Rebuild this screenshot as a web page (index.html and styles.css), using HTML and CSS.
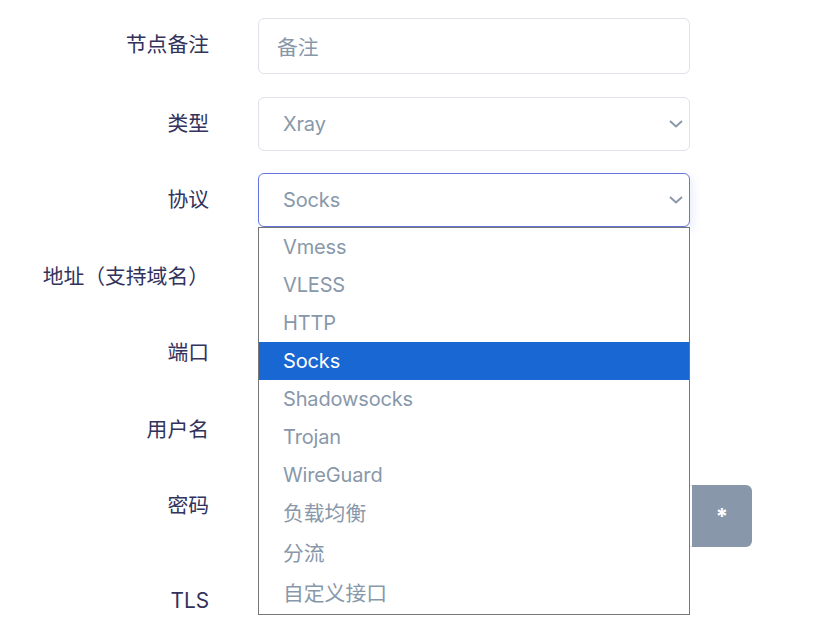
FILE: index.html
```html
<!DOCTYPE html>
<html lang="zh-CN">
<head>
<meta charset="utf-8">
<title>节点设置</title>
<link rel="stylesheet" href="styles.css">
</head>
<body>
<form class="form">
  <div class="row">
    <label class="label">节点备注</label>
    <div class="control input input-tall"><span class="placeholder">备注</span></div>
  </div>
  <div class="row">
    <label class="label">类型</label>
    <div class="control select">
      <span class="value">Xray</span>
      <svg class="chevron" width="14" height="8" viewBox="0 0 14 8"><path d="M1 1l6 5.5L13 1" fill="none" stroke="#8898aa" stroke-width="2"/></svg>
    </div>
  </div>
  <div class="row">
    <label class="label">协议</label>
    <div class="select-wrap">
      <div class="control select focused">
        <span class="value">Socks</span>
        <svg class="chevron" width="14" height="8" viewBox="0 0 14 8"><path d="M1 1l6 5.5L13 1" fill="none" stroke="#8898aa" stroke-width="2"/></svg>
      </div>
      <ul class="dropdown">
        <li class="opt">Vmess</li>
        <li class="opt">VLESS</li>
        <li class="opt">HTTP</li>
        <li class="opt selected">Socks</li>
        <li class="opt">Shadowsocks</li>
        <li class="opt">Trojan</li>
        <li class="opt">WireGuard</li>
        <li class="opt cjk">负载均衡</li>
        <li class="opt cjk">分流</li>
        <li class="opt cjk">自定义接口</li>
      </ul>
    </div>
  </div>
  <div class="row">
    <label class="label">地址（支持域名）</label>
    <div class="control input"></div>
  </div>
  <div class="row">
    <label class="label">端口</label>
    <div class="control input"></div>
  </div>
  <div class="row">
    <label class="label">用户名</label>
    <div class="control input"></div>
  </div>
  <div class="row">
    <label class="label">密码</label>
    <div class="group">
      <div class="input group-input"></div>
      <button type="button" class="btn-gen">*</button>
    </div>
  </div>
  <div class="row row-tls">
    <label class="label">TLS</label>
    <div class="toggle"><span class="knob"></span></div>
  </div>
</form>
</body>
</html>
```

FILE: styles.css
```css
* { box-sizing: border-box; }
html, body { margin: 0; padding: 0; background: #fff; }
body {
  width: 815px;
  height: 627px;
  overflow: hidden;
  font-family: Inter, "Noto Sans CJK SC", sans-serif;
  font-size: 20.8px;
  color: #32325d;
}
.form {
  display: flex;
  flex-direction: column;
  gap: 22.5px;
  padding-top: 18px;
}
.row {
  display: grid;
  grid-template-columns: 209px auto;
  column-gap: 49px;
  align-items: start;
  justify-items: start;
}
.label {
  justify-self: end;
  height: 54px;
  line-height: 54px;
  white-space: nowrap;
  color: #32325d;
}
.control {
  width: 432px;
  height: 54px;
  border: 1px solid #e0e2ea;
  border-radius: 6px;
  background: #fff;
  display: flex;
  align-items: center;
}
.input-tall { height: 56px; }
.input { padding-left: 18px; }
.placeholder { color: #8898aa; }
.select {
  padding-left: 24px;
  padding-right: 6px;
  justify-content: space-between;
}
.value {
  color: #8898aa;
  font-size: 20px;
  letter-spacing: -0.15px;
}
.chevron { display: block; }
.select.focused {
  border-color: #6675e0;
  box-shadow: 3px 4px 10px rgba(94, 114, 228, 0.12);
}
.select-wrap { position: relative; }
.dropdown {
  position: absolute;
  top: 100%;
  left: 0;
  width: 432px;
  margin: 0;
  padding: 0;
  list-style: none;
  background: #fff;
  border: 1px solid #767676;
  z-index: 10;
}
.opt {
  height: 38px;
  line-height: 38px;
  padding-left: 24px;
  color: #8898aa;
  font-size: 20px;
  letter-spacing: -0.15px;
  white-space: nowrap;
}
.opt.cjk {
  height: 40px;
  line-height: 40px;
  font-size: 20.8px;
  letter-spacing: 0;
}
.opt.selected { background: #1967d2; color: #fff; }
.group {
  display: flex;
  width: 494px;
  height: 62px;
  margin-top: 6px;
}
.group-input {
  flex: 1;
  border: 1px solid #e0e2ea;
  border-right: 0;
  border-radius: 6px 0 0 6px;
}
.btn-gen {
  width: 60px;
  height: 62px;
  border: 0;
  border-radius: 0 6px 6px 0;
  background: #8898aa;
  color: #fff;
  font-family: Inter, sans-serif;
  font-size: 22px;
  font-weight: 700;
  padding: 0;
}
.row-tls { margin-top: 4px; }
.toggle {
  margin-top: 15px;
  width: 46px;
  height: 24px;
  border-radius: 12px;
  background: #e9ecef;
  position: relative;
}
.knob {
  position: absolute;
  left: 3px;
  top: 3px;
  width: 18px;
  height: 18px;
  border-radius: 50%;
  background: #fff;
}
```
